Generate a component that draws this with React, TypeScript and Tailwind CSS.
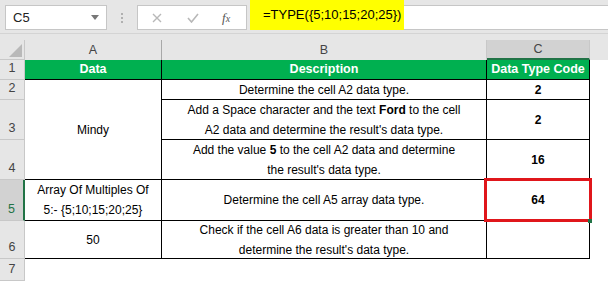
import React from "react";

const font = { fontFamily: '"Liberation Sans", Arial, sans-serif' };

function RowHead({ n, h, selected }: { n: number; h: string; selected?: boolean }) {
  return (
    <div
      className={`${h} flex items-end justify-center pb-[1px] text-[12.5px] border-b border-[#c8c8c8] ${
        selected
          ? "bg-[#d2d2d2] text-[#217346] border-r-2 border-r-[#217346]"
          : "bg-[#e6e6e6] text-[#444] border-r border-r-[#c8c8c8]"
      }`}
    >
      {n}
    </div>
  );
}

function Cell({ children, bold, className = "" }: { children?: React.ReactNode; bold?: boolean; className?: string }) {
  return (
    <div
      className={`flex items-center justify-center text-center leading-[20px] text-[12px] text-black bg-white border-r border-b border-black ${
        bold ? "font-bold" : ""
      } ${className}`}
    >
      {children}
    </div>
  );
}

export default function App() {
  return (
    <div className="w-[608px] h-[281px] overflow-hidden bg-[#e6e6e6] select-none" style={font}>
      {/* formula bar */}
      <div className="flex items-end h-[30px]">
        <div className="ml-[5px] w-[102px] h-[25px] bg-white border border-[#c6c6c6] flex items-center justify-between pl-[7px] pr-[7px] text-[13px] text-[#222]">
          <span>C5</span>
          <svg width="8" height="5" viewBox="0 0 8 5">
            <path d="M0 0 L8 0 L4 5 Z" fill="#777" />
          </svg>
        </div>
        <div className="w-[30px] h-[25px] flex flex-col items-center justify-center gap-[2px]">
          <span className="w-[2px] h-[2px] bg-[#b0b0b0]" />
          <span className="w-[2px] h-[2px] bg-[#b0b0b0]" />
          <span className="w-[2px] h-[2px] bg-[#b0b0b0]" />
        </div>
        <div className="w-[110px] h-[25px] bg-white border border-[#c6c6c6] flex items-center">
          <svg className="ml-[14px]" width="10" height="10" viewBox="0 0 10 10">
            <path d="M1 1 L9 9 M9 1 L1 9" stroke="#b8b8b8" strokeWidth="1.4" />
          </svg>
          <svg className="ml-[25px]" width="12" height="10" viewBox="0 0 12 10">
            <path d="M1 5 L4.5 9 L11 1" stroke="#b8b8b8" strokeWidth="1.6" fill="none" />
          </svg>
          <span
            className="ml-[23px] text-[13px] italic text-[#555]"
            style={{ fontFamily: '"Liberation Serif", "Times New Roman", serif' }}
          >
            f<span className="text-[10px]">x</span>
          </span>
        </div>
        <div className="ml-[3px] w-[154px] h-[30px] bg-[#ffff00] flex items-center pl-[13px] text-[13px] text-black">
          =TYPE({"{"}5;10;15;20;25{"})"}
        </div>
        <div className="flex-1 h-[25px] bg-white border-y border-[#c6c6c6]" />
      </div>
      <div className="h-[3px]" />
      <div className="h-[1px] bg-[#d4d4d4]" />
      <div className="h-[6px]" />

      {/* sheet */}
      <div className="grid grid-cols-[25px_137px_325px_103px_18px] grid-rows-[20px_20px_20px_40px_40px_41px_38px_22px]">
        {/* column headers */}
        <div className="bg-[#e6e6e6] border-r border-b border-[#c8c8c8] flex items-end justify-end p-[2px]">
          <svg width="13" height="13" viewBox="0 0 13 13">
            <path d="M13 0 L13 13 L0 13 Z" fill="#b9b9b9" />
          </svg>
        </div>
        <div className="bg-[#e6e6e6] border-r border-[#a8a8a8] flex items-center justify-center text-[12.5px] text-[#444]">A</div>
        <div className="bg-[#e6e6e6] border-r border-[#c8c8c8] flex items-center justify-center text-[12.5px] text-[#444]">B</div>
        <div className="bg-[#d2d2d2] border-r border-[#c8c8c8] border-b-2 border-b-[#217346] flex items-center justify-center text-[12.5px] text-[#444]">C</div>
        <div className="bg-[#e6e6e6]" />

        {/* row 1 */}
        <RowHead n={1} h="" />
        <div className="bg-[#00b050] border-r border-b border-black flex items-center justify-center text-white font-bold text-[12.5px]">Data</div>
        <div className="bg-[#00b050] border-r border-b border-black flex items-center justify-center text-white font-bold text-[12.5px]">Description</div>
        <div className="bg-[#00b050] border-r border-b border-black flex items-center justify-center text-white font-bold text-[12.5px]">Data Type Code</div>
        <div className="bg-white" />

        {/* row 2 */}
        <RowHead n={2} h="" />
        <Cell className="row-span-3">Mindy</Cell>
        <Cell>Determine the cell A2 data type.</Cell>
        <Cell bold>2</Cell>
        <div className="bg-white" />

        {/* row 3 */}
        <RowHead n={3} h="" />
        <Cell>
          <span>
            Add a Space character and the text <b>Ford</b> to the cell
            <br />
            A2 data and determine the result's data type.
          </span>
        </Cell>
        <Cell bold>2</Cell>
        <div className="bg-white" />

        {/* row 4 */}
        <RowHead n={4} h="" />
        <Cell>
          <span>
            Add the value <b>5</b> to the cell A2 data and determine
            <br />
            the result's data type.
          </span>
        </Cell>
        <Cell bold>16</Cell>
        <div className="bg-white" />

        {/* row 5 */}
        <RowHead n={5} h="" selected />
        <Cell>
          <span>
            Array Of Multiples Of
            <br />
            5:- {"{5;10;15;20;25}"}
          </span>
        </Cell>
        <Cell>Determine the cell A5 array data type.</Cell>
        <Cell bold className="relative">
          64
          <div className="absolute -top-[2px] -left-[3px] -right-[3px] -bottom-[2px] border-[3px] border-[#e0161b]" />
          <div className="absolute -right-[3px] -bottom-[3px] w-[4px] h-[4px] bg-[#217346]" />
        </Cell>
        <div className="bg-white" />

        {/* row 6 */}
        <RowHead n={6} h="" />
        <Cell>50</Cell>
        <Cell>
          <span>
            Check if the cell A6 data is greater than 10 and
            <br />
            determine the result's data type.
          </span>
        </Cell>
        <Cell />
        <div className="bg-white" />

        {/* row 7 */}
        <RowHead n={7} h="" />
        <div className="bg-white col-span-4" />
      </div>
    </div>
  );
}
